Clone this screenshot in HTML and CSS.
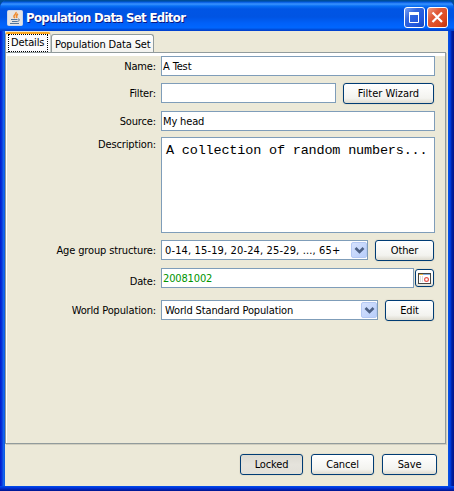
FILE: index.html
```html
<!DOCTYPE html>
<html lang="en">
<head>
<meta charset="utf-8">
<title>Population Data Set Editor</title>
<link rel="stylesheet" href="styles.css">
</head>
<body>
<div class="window">
  <header class="titlebar">
    <svg class="app-icon" width="16" height="16" viewBox="0 0 16 16">
      <rect x=".5" y=".5" width="15" height="15" rx="1" fill="#e6e4e2" stroke="#cbd5e8"/>
      <path d="M9 2c1 2-3 3-2 5l1 1M11 4c-2 1-2 2-1 4" fill="none" stroke="#ef8a2c" stroke-width="1.5"/>
      <path d="M4 9.500h6.500M5 11.500h5M3 13.500h9M11 9c3 0 1 2.500-1 2.500" fill="none" stroke="#55779c"/>
    </svg>
    <h1 class="title">Population Data Set Editor</h1>
    <button class="caption maximize" aria-label="Maximize">
      <svg width="19" height="19" viewBox="0 0 19 19"><path d="M4.500 5v9.500h9V5" fill="none" stroke="#fff"/><path d="M4 5.500h10" stroke="#fff" stroke-width="3"/></svg>
    </button>
    <button class="caption close" aria-label="Close">
      <svg width="19" height="19" viewBox="0 0 19 19"><path d="M4.500 4.500l9.500 9.500M14 4.500L4.500 14" stroke="#fff" stroke-width="2.200"/></svg>
    </button>
  </header>
  <main class="content">
    <nav class="tabs">
      <div class="tab active"><span>Details</span></div>
      <div class="tab"><span>Population Data Set</span></div>
    </nav>
    <section class="pane">
      <div class="row name"><label>Name:</label><div class="field grow">A Test</div></div>
      <div class="row filter"><label>Filter:</label><div class="field grow"></div><button class="btn wizard">Filter Wizard</button></div>
      <div class="row source"><label>Source:</label><div class="field grow">My head</div></div>
      <div class="row description"><label>Description:</label><div class="field area grow">A collection of random numbers...</div></div>
      <div class="row age"><label>Age group structure:</label>
        <div class="field combo grow"><span class="ages">0-14, 15-19, 20-24, 25-29, ..., 65+</span><span class="arrow"><svg width="15" height="16" viewBox="0 0 15 16"><path d="M3.500 6l4 4 4-4" fill="none" stroke="#4d6185" stroke-width="2.600"/></svg></span></div>
        <button class="btn other">Other</button></div>
      <div class="row date"><label>Date:</label><div class="field green grow">20081002</div>
        <button class="btn calendar" aria-label="Choose date"><svg width="13" height="11" viewBox="0 0 13 11"><rect x=".5" y=".5" width="12" height="10" fill="#fff" stroke="#454545"/><path d="M1 1.500h4" stroke="#e9b343"/><path d="M5 1.500h7" stroke="#80aee0"/><path d="M2.500 3v6M4.500 3v6" stroke="#ddd"/><circle cx="8.500" cy="6.500" r="1.900" fill="#fff" stroke="#e5534d" stroke-width="1.200"/></svg></button></div>
      <div class="row world"><label>World Population:</label>
        <div class="field combo grow"><span>World Standard Population</span><span class="arrow"><svg width="15" height="16" viewBox="0 0 15 16"><path d="M3.500 6l4 4 4-4" fill="none" stroke="#4d6185" stroke-width="2.600"/></svg></span></div>
        <button class="btn edit">Edit</button></div>
    </section>
    <footer class="actions">
      <button class="btn locked">Locked</button>
      <button class="btn cancel">Cancel</button>
      <button class="btn save">Save</button>
    </footer>
  </main>
</div>
</body>
</html>
```
FILE: styles.css
```css
* { box-sizing: border-box; }
body {
  margin: 0;
  background: #004e98;
  font: 11px/14px "DejaVu Sans Condensed", "DejaVu Sans", sans-serif;
  font-stretch: condensed;
  letter-spacing: -0.14px;
  color: #000;
}
button { font: inherit; letter-spacing: inherit; padding: 0; color: inherit; }
svg { display: block; }
.window {
  width: 454px;
  height: 491px;
  padding: 0 6px 5px 5px;
  border-radius: 8px 8px 0 0;
  background:
    linear-gradient(to bottom, #0050ee, #0030d8 40%, #00138c) bottom / 100% 5px no-repeat,
    linear-gradient(to right, #0019cf, #0831d9 35%, #166aee 75%, #0855dd) left / 5px 100% no-repeat,
    linear-gradient(to right, #0855dd, #0040e8 35%, #001ea0 65%, #00138c) right / 6px 100% no-repeat;
}
.titlebar {
  display: flex;
  align-items: center;
  height: 31px;
  margin: 0 -6px 0 -5px;
  padding: 4px 6px 0 7px;
  border-radius: 8px 8px 0 0;
  background: linear-gradient(#004e98 0, #004e98 1px, #0058e0 2px, #3a93ff 4px, #0870f5 6px, #0055e5 9px, #0054e3 17px, #0060f8 23px, #0066ff 28px, #0052df 29px, #003dcc 31px);
}
.title {
  flex: 1;
  margin: 0 0 0 3px;
  font: bold 13px/18px "DejaVu Sans Condensed", "DejaVu Sans", sans-serif;
  font-stretch: condensed;
  letter-spacing: -0.65px;
  white-space: nowrap;
  color: #fff;
  text-shadow: 1px 1px #0a1883;
}
.caption {
  width: 21px;
  height: 21px;
  margin-left: 2px;
  border: 1px solid #fff;
  border-radius: 3px;
}
.maximize { background: linear-gradient(135deg, #7aa2f5, #3165dd 35%, #2258de 70%, #1747bc); }
.close { background: linear-gradient(135deg, #f09a80, #e05a38 35%, #df4a20 70%, #b8320e); }
.content {
  display: flex;
  flex-direction: column;
  height: 455px;
  background: #ece9d8;
}
.tabs { display: flex; align-items: flex-end; height: 21px; padding-top: 1px; }
.tab {
  width: 103px;
  height: 18px;
  padding: 3px 0 0 3px;
  border: 1px solid #919b9c;
  border-bottom: 0;
  border-radius: 3px 3px 0 0;
  background: linear-gradient(#fff, #f3f3ef);
  white-space: nowrap;
}
.tab.active {
  width: 46px;
  height: 20px;
  padding: 0 2px;
  border-top: 2px solid #ffa922;
  border-right-color: #c9cdca;
  background: #fcfcfe;
}
.active span { display: block; height: 18px; padding: 1px 0 0 2px; border: 1px dotted #000; }
.pane {
  width: 441px;
  height: 392px;
  padding: 3px 10px 0 14px;
  border: 1px solid #919b9c;
  box-shadow: inset 1px 0 #fff, inset 0 3px #fff, 1px 1px #d0cebf;
}
.row { display: flex; height: 21px; margin-bottom: 7px; }
.row label { width: 136px; margin-right: 5px; padding-top: 4px; text-align: right; white-space: nowrap; }
.field {
  height: 20px;
  padding: 3px 1px;
  border: 1px solid #7f9db9;
  background: #fff;
  white-space: nowrap;
}
.grow { flex: 1; min-width: 0; }
.name { height: 20px; }
.source { height: 20px; margin-bottom: 6px; }
.description { height: 96px; }
.description label { padding-top: 1px; }
.area {
  height: 96px;
  padding: 5px 4px;
  font: 13.500px/15px "Liberation Mono", monospace;
  letter-spacing: -0.18px;
}
.date { margin-bottom: 11px; }
.date label { padding-top: 7px; }
.green { color: #009400; }
.combo { display: flex; justify-content: space-between; padding: 1px 0 1px 3px; }
.combo > span:first-child { padding-top: 2px; }
.ages { letter-spacing: 0.14px; }
.arrow {
  width: 16px;
  height: 16px;
  border: 1px solid #b4c8f3;
  border-radius: 2px;
  background: linear-gradient(135deg, #d5e1fd, #b8cefa);
}
.arrow svg { margin: -1px 0 0 -.5px; }
.btn {
  height: 21px;
  border: 1px solid #003c74;
  border-radius: 3px;
  background: linear-gradient(#fff, #f3f3ef 75%, #dedbd0);
  box-shadow: 0 0 0 1px #e4e0cf;
  text-align: center;
  white-space: nowrap;
}
.wizard { width: 91px; margin: 0 1px 0 7px; letter-spacing: 0; }
.other { width: 59px; margin: 0 1px 0 7px; }
.edit { width: 49px; margin: 0 1px 0 7px; }
.calendar { display: grid; place-items: center; width: 19px; height: 18px; margin: 1px 1px 0; }
.actions { display: flex; justify-content: flex-end; gap: 8px; padding: 9px 11px 0 0; margin-top: 1px; }
.locked { width: 63px; background: linear-gradient(#dcdad2, #e5e3dc 50%, #e2e0d8); }
.cancel { width: 63px; }
.save { width: 55px; }
```
